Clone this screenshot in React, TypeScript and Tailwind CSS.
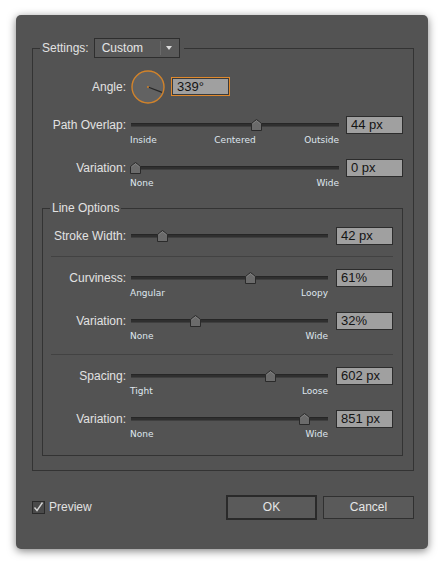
import React from "react";

const SANS = "font-['Liberation_Sans',Arial,sans-serif]";
const SMALL = "font-['DejaVu_Sans',Verdana,sans-serif]";

function Thumb({ left }: { left: number }) {
  return (
    <svg
      className="absolute top-[3px]"
      style={{ left: left - 5.5 }}
      width="11"
      height="12"
      viewBox="0 0 11 12"
    >
      <path
        d="M0.5 4.5 L5.5 0.5 L10.5 4.5 L10.5 11.5 L0.5 11.5 Z"
        fill="#6b6b6b"
        stroke="#2a2a2a"
        strokeWidth="1"
      />
      <path d="M1.5 4.9 L5.5 1.7 L9.5 4.9" fill="none" stroke="#858585" strokeWidth="0.8" />
    </svg>
  );
}

function Track({ pos }: { pos: number }) {
  return (
    <div className="relative flex-1 h-[18px] flex items-center">
      <div className="w-full h-[4px] bg-[#2f2f2f] border-t border-t-[#262626] border-b border-b-[#3f3f3f]" />
      <Thumb left={pos} />
    </div>
  );
}

function ValueBox({ value }: { value: string }) {
  return (
    <div
      className={`w-[57px] h-[18px] shrink-0 bg-[#a0a0a0] border border-[#2c2c2c] pl-[4px] flex items-center text-[13px] text-[#141414] ${SANS}`}
    >
      {value}
    </div>
  );
}

type RowProps = {
  label: string;
  value: string;
  pos: number;
  labelCls: string;
  gapCls: string;
  subPadCls?: string;
  subRightCls?: string;
  sub?: [string, string, string?];
};

function SliderRow({ label, value, pos, labelCls, gapCls, subPadCls, subRightCls, sub }: RowProps) {
  return (
    <div>
      <div className={`flex items-center h-[18px] ${gapCls}`}>
        <div className={`${labelCls} shrink-0 text-right text-[12px] text-[#e2e2e2] ${SANS}`}>
          {label}
        </div>
        <Track pos={pos} />
        <ValueBox value={value} />
      </div>
      {sub && (
        <div className={`${subPadCls} ${subRightCls} h-[13px]`}>
          <div
            className={`grid grid-cols-3 h-[13px] leading-[13px] text-[9px] text-[#dfe6ee] ${SMALL}`}
          >
            <span className="text-left -ml-[1px]">{sub[0]}</span>
            <span className="text-center">{sub[2] ?? ""}</span>
            <span className="text-right">{sub[1]}</span>
          </div>
        </div>
      )}
    </div>
  );
}

function Dial() {
  return (
    <svg width="34" height="34" viewBox="0 0 34 34" className="shrink-0">
      <circle cx="17" cy="17" r="16" fill="#626262" stroke="#d1832b" strokeWidth="1.4" />
      <line x1="17" y1="17" x2="31" y2="22.4" stroke="#262626" strokeWidth="1.2" />
      <circle cx="17" cy="17" r="1" fill="#d1832b" />
    </svg>
  );
}

export default function App() {
  return (
    <div className="w-[444px] h-[564px] bg-white pt-[15px] pl-[16px]">
      <div className="w-[412px] h-[534px] rounded-[5px] bg-[#535353] shadow-[0_2px_9px_rgba(0,0,0,0.5)] pt-[23px] pl-[16px] pr-[14px]">
        <fieldset className="w-[382px] border border-[#333333]">
          <legend className="ml-[7px] px-[2px] flex items-center h-[20px]">
            <span className={`text-[12px] text-[#e2e2e2] ${SANS} mr-[5px]`}>Settings:</span>
            <div className="w-[86px] h-[20px] bg-[#595959] border border-[#2e2e2e] flex items-center mr-[2px]">
              <span className={`pl-[7px] w-[65px] text-[12px] text-[#e6e6e6] ${SANS}`}>Custom</span>
              <div className="w-[1px] h-[14px] bg-[#3a3a3a] border-r border-r-[#6a6a6a]" />
              <svg width="18" height="8" viewBox="0 0 18 8">
                <path d="M5 2 L11 2 L8 6 Z" fill="#dcdcdc" />
              </svg>
            </div>
          </legend>

          <div className="pt-[12px]">
            <div className="flex items-center h-[33px]">
              <div className={`w-[93px] shrink-0 text-right text-[12px] text-[#e2e2e2] ${SANS}`}>
                Angle:
              </div>
              <div className="ml-[5px]">
                <Dial />
              </div>
              <div
                className={`ml-[6px] w-[59px] h-[19px] bg-[#a0a0a0] border border-[#e0892c] shadow-[inset_0_0_0_1px_#3a3a3a] pl-[5px] flex items-center text-[13px] text-[#141414] ${SANS}`}
              >
                339°
              </div>
            </div>

            <div className="mt-[13px] pr-[10px]">
              <SliderRow
                label="Path Overlap:"
                value="44 px"
                pos={125}
                labelCls="w-[93px]"
                gapCls="gap-[5px] [&>*:last-child]:ml-[2px]"
                subPadCls="pl-[98px]"
                subRightCls="pr-[64px]"
                sub={["Inside", "Outside", "Centered"]}
              />
            </div>
            <div className="mt-[12px] pr-[10px]">
              <SliderRow
                label="Variation:"
                value="0 px"
                pos={4.5}
                labelCls="w-[93px]"
                gapCls="gap-[5px] [&>*:last-child]:ml-[2px]"
                subPadCls="pl-[98px]"
                subRightCls="pr-[64px]"
                sub={["None", "Wide"]}
              />
            </div>

            <fieldset className="mt-[11px] ml-[9px] mr-[10px] mb-[14px] border border-[#333333]">
              <legend className={`ml-[7px] px-[2px] h-[14px] leading-[14px] text-[12px] text-[#e2e2e2] ${SANS}`}>
                Line Options
              </legend>
              <div className="pt-[12px] pb-[14px] pr-[9px]">
                <SliderRow
                  label="Stroke Width:"
                  value="42 px"
                  pos={31}
                  labelCls="w-[83px]"
                  gapCls="gap-[5px] [&>*:last-child]:ml-[3px]"
                />
                <div className="mt-[11px] ml-[8px] h-[1px] bg-[#424242]" />
                <div className="mt-[12px]">
                  <SliderRow
                    label="Curviness:"
                    value="61%"
                    pos={119}
                    labelCls="w-[83px]"
                    gapCls="gap-[5px] [&>*:last-child]:ml-[3px]"
                    subPadCls="pl-[88px]"
                    subRightCls="pr-[65px]"
                    sub={["Angular", "Loopy"]}
                  />
                </div>
                <div className="mt-[12px]">
                  <SliderRow
                    label="Variation:"
                    value="32%"
                    pos={64}
                    labelCls="w-[83px]"
                    gapCls="gap-[5px] [&>*:last-child]:ml-[3px]"
                    subPadCls="pl-[88px]"
                    subRightCls="pr-[65px]"
                    sub={["None", "Wide"]}
                  />
                </div>
                <div className="mt-[11px] ml-[8px] h-[1px] bg-[#424242]" />
                <div className="mt-[12px]">
                  <SliderRow
                    label="Spacing:"
                    value="602 px"
                    pos={139}
                    labelCls="w-[83px]"
                    gapCls="gap-[5px] [&>*:last-child]:ml-[3px]"
                    subPadCls="pl-[88px]"
                    subRightCls="pr-[65px]"
                    sub={["Tight", "Loose"]}
                  />
                </div>
                <div className="mt-[12px]">
                  <SliderRow
                    label="Variation:"
                    value="851 px"
                    pos={173}
                    labelCls="w-[83px]"
                    gapCls="gap-[5px] [&>*:last-child]:ml-[3px]"
                    subPadCls="pl-[88px]"
                    subRightCls="pr-[65px]"
                    sub={["None", "Wide"]}
                  />
                </div>
              </div>
            </fieldset>
          </div>
        </fieldset>

        <div className="mt-[24px] flex items-center h-[24px]">
          <div className="flex items-center">
            <svg width="13" height="13" viewBox="0 0 13 13">
              <rect x="0.5" y="0.5" width="12" height="12" fill="#4a4a4a" stroke="#2a2a2a" />
              <path d="M2.5 6.5 L5 9.5 L10.5 1.5" fill="none" stroke="#d4d4d4" strokeWidth="1.4" />
            </svg>
            <span className={`ml-[4px] text-[12px] text-[#e2e2e2] ${SANS}`}>Preview</span>
          </div>
          <div className="ml-auto flex items-center gap-[6px]">
            <button
              className={`w-[91px] h-[25px] bg-[#5a5a5a] border-2 border-[#2a2a2a] text-[12px] text-[#e6e6e6] ${SANS}`}
            >
              OK
            </button>
            <button
              className={`w-[91px] h-[23px] bg-[#5a5a5a] border border-[#303030] text-[12px] text-[#e6e6e6] ${SANS}`}
            >
              Cancel
            </button>
          </div>
        </div>
      </div>
    </div>
  );
}
